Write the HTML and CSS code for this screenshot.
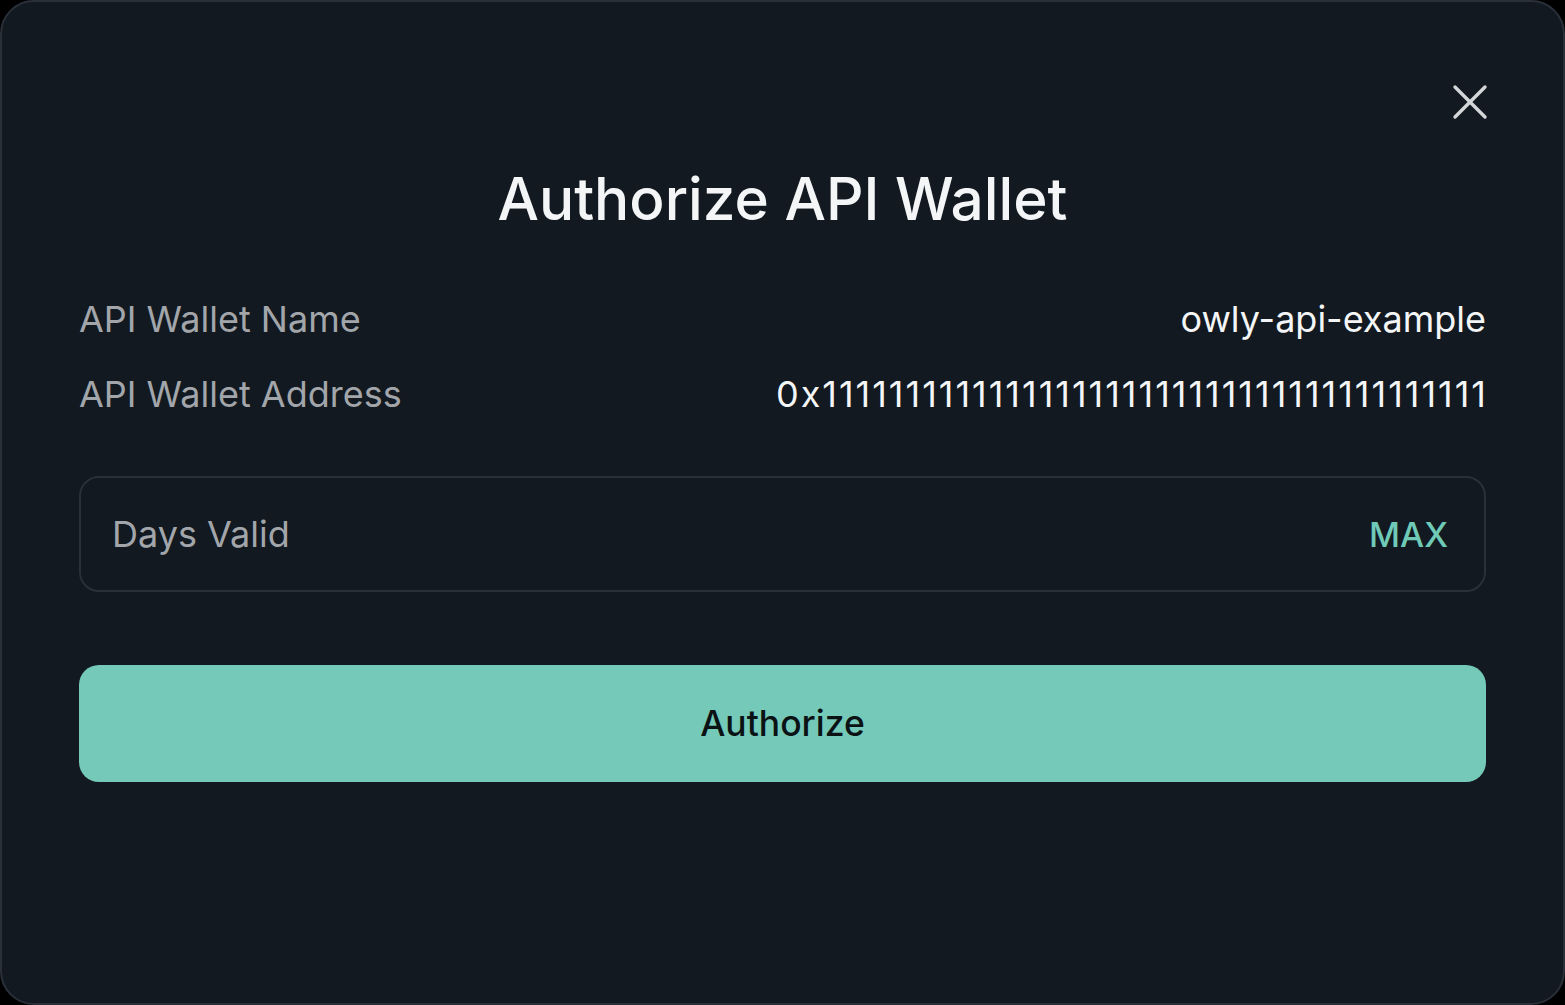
FILE: index.html
```html
<!DOCTYPE html>
<html lang="en">
<head>
  <meta charset="UTF-8">
  <title>Authorize API Wallet</title>
  <link rel="stylesheet" href="styles.css">
</head>
<body>
  <div class="modal">
    <div class="modal-top">
      <button class="close-button" aria-label="Close">
        <svg width="36" height="36" viewBox="0 0 36 36" fill="none" stroke="currentColor" stroke-width="3.4" stroke-linecap="round">
          <path d="M3 3 L33 33 M33 3 L3 33"/>
        </svg>
      </button>
    </div>
    <h1 class="modal-title">Authorize API Wallet</h1>

    <div class="info-rows">
      <div class="info-row">
        <span class="info-label">API Wallet Name</span>
        <span class="info-value">owly-api-example</span>
      </div>
      <div class="info-row">
        <span class="info-label">API Wallet Address</span>
        <span class="info-value address">0x1111111111111111111111111111111111111111</span>
      </div>
    </div>

    <div class="days-input">
      <span class="days-placeholder">Days Valid</span>
      <span class="max-button">MAX</span>
    </div>

    <button class="authorize-button">Authorize</button>
  </div>
</body>
</html>
```

FILE: styles.css
```css
body {
  margin: 0;
  background: #000;
  font-family: Inter, "Noto Sans", sans-serif;
  height: 100vh;
  overflow: hidden;
}

.modal {
  box-sizing: border-box;
  height: 1005px;
  background: #121920;
  border: 2px solid #2a3039;
  border-radius: 34px;
  padding: 82px 77px 0 77px;
  display: flex;
  flex-direction: column;
}

.modal-top {
  display: flex;
  justify-content: flex-end;
  height: 40px;
}

.close-button {
  background: transparent;
  border: none;
  padding: 0;
  margin-right: -2px;
  color: #d4d6d8;
  width: 36px;
  height: 36px;
}

.modal-title {
  margin: 40px 0 0 0;
  text-align: center;
  font-size: 58.5px;
  font-weight: 500;
  color: #f4f5f6;
  line-height: 70px;
}

.info-rows {
  margin-top: 65px;
  display: flex;
  flex-direction: column;
  gap: 34px;
}

.info-row {
  display: flex;
  justify-content: space-between;
  align-items: center;
  font-size: 36px;
  line-height: 41px;
}

.info-label {
  color: #a2a6ab;
}

.info-value {
  color: #f4f5f6;
}

.address {
  letter-spacing: 2px;
  margin-right: -2px;
}

.days-input {
  margin-top: 61px;
  height: 116px;
  box-sizing: border-box;
  border: 2px solid #2a3039;
  border-radius: 20px;
  display: flex;
  justify-content: space-between;
  align-items: center;
  padding: 0 36px 0 31px;
  font-size: 36px;
}

.days-placeholder {
  color: #a2a6ab;
}

.max-button {
  color: #6fcab8;
  font-size: 34px;
  font-weight: 500;
}

.authorize-button {
  margin-top: 73px;
  height: 117px;
  border: none;
  border-radius: 20px;
  background: #74c9b9;
  color: #0b1214;
  font-family: inherit;
  font-size: 35.5px;
  font-weight: 500;
}
```
